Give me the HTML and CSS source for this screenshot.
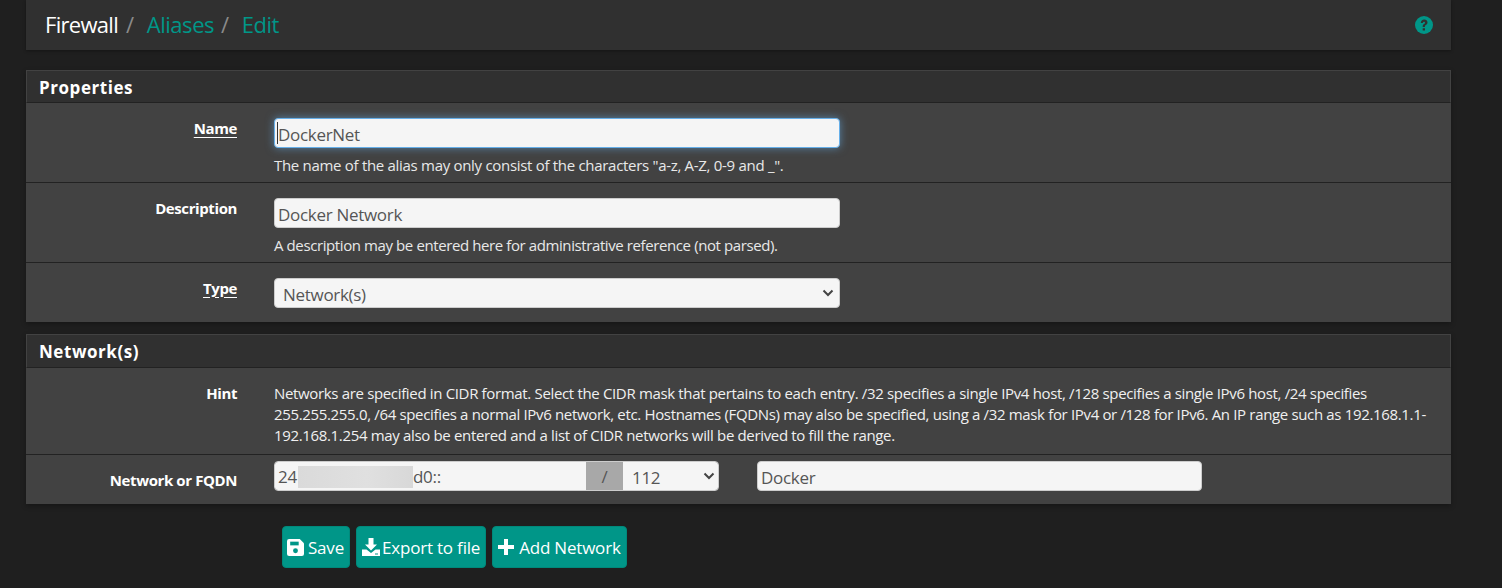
FILE: index.html
```html
<!DOCTYPE html>
<html lang="en">
<head>
<meta charset="utf-8">
<title>Firewall: Aliases: Edit</title>
<link rel="stylesheet" href="styles.css">
</head>
<body>
<div class="page">
  <header class="topbar">
    <nav class="crumbs">
      <span class="crumb-current">Firewall</span><span class="sep">/</span><a class="crumb-link">Aliases</a><span class="sep sep-two">/</span><a class="crumb-link">Edit</a>
    </nav>
    <svg class="help" viewBox="0 0 18 18" aria-label="Help"><circle cx="9" cy="9" r="9" fill="#009688"/><path d="M5.800 6.900C5.900 4.900 7.200 3.600 9.200 3.600c1.900 0 3.300 1.200 3.300 2.900 0 1.300-.7 2-1.600 2.600-.8.5-1 .8-1 1.500v.3H7.700v-.5c0-1.100.4-1.800 1.300-2.400.8-.5 1-.8 1-1.300 0-.6-.4-1-1-1-.7 0-1.100.4-1.200 1.200z M7.700 12.200h2.300v2.200H7.700z" fill="#303030"/></svg>
  </header>

  <section class="panel panel-props">
    <h2 class="panel-title">Properties</h2>
    <div class="row row-name">
      <label class="label req">Name</label>
      <div class="field">
        <div class="caret-wrap">
          <input class="input input-wide focus" type="text" value="DockerNet">
          <span class="caret"></span>
        </div>
        <p class="help-text">The name of the alias may only consist of the characters "a-z, A-Z, 0-9 and _".</p>
      </div>
    </div>
    <div class="row row-name">
      <label class="label">Description</label>
      <div class="field">
        <input class="input input-wide" type="text" value="Docker Network">
        <p class="help-text help-tight">A description may be entered here for administrative reference (not parsed).</p>
      </div>
    </div>
    <div class="row row-type">
      <label class="label req">Type</label>
      <div class="field">
        <div class="select input-wide"><span>Network(s)</span><svg class="chev" viewBox="0 0 12 8"><path d="M1.500 1.500 6 6l4.500-4.500" fill="none" stroke="#444" stroke-width="2"/></svg></div>
      </div>
    </div>
  </section>

  <section class="panel panel-net">
    <h2 class="panel-title net-title">Network(s)</h2>
    <div class="row row-hint">
      <label class="label">Hint</label>
      <div class="field hint">Networks are specified in CIDR format. Select the CIDR mask that pertains to each entry. /32 specifies a single IPv4 host, /128 specifies a single IPv6 host, /24 specifies 255.255.255.0, /64 specifies a normal IPv6 network, etc. Hostnames (FQDNs) may also be specified, using a /32 mask for IPv4 or /128 for IPv6. An IP range such as 192.168.1.1-192.168.1.254 may also be entered and a list of CIDR networks will be derived to fill the range.</div>
    </div>
    <div class="row row-net">
      <label class="label">Network or FQDN</label>
      <div class="field net-fields">
        <div class="group">
          <div class="addr"><span class="addr-start">24</span><span class="redact"></span><span>d0::</span></div>
          <div class="slash">/</div>
          <div class="mask"><span>112</span><svg class="chev" viewBox="0 0 12 8"><path d="M1.500 1.500 6 6l4.500-4.500" fill="none" stroke="#444" stroke-width="2"/></svg></div>
        </div>
        <input class="input input-desc" type="text" value="Docker">
      </div>
    </div>
  </section>

  <div class="actions">
    <button class="btn" type="button"><svg class="ic ic-save" viewBox="0 0 16 16"><path fill="#fff" d="M2 0h10l4 4v10a2 2 0 0 1-2 2H2a2 2 0 0 1-2-2V2a2 2 0 0 1 2-2z"/><path fill="#009688" d="M3 2.500h8v3.500H3z"/><circle cx="8" cy="11" r="2.300" fill="#009688"/></svg>Save</button>
    <button class="btn" type="button"><svg class="ic ic-dl" viewBox="0 0 18 18"><path fill="#fff" d="M6.500 0h5v6.500H15L9 12.500 3 6.500h3.500z"/><path fill="#fff" d="M0 11.500h4.500L9 15l4.500-3.500H18V18H0z"/><path fill="#009688" d="M13 15.500h3v1h-3z"/></svg>Export to file</button>
    <button class="btn" type="button"><svg class="ic ic-plus" viewBox="0 0 16 16"><path fill="#fff" d="M6 0h4v6h6v4h-6v6H6v-6H0V6h6z"/></svg>Add Network</button>
  </div>
</div>
</body>
</html>
```
FILE: styles.css
```css
* { box-sizing: border-box; }
html, body { margin: 0; height: 100%; }
body {
  background: #1f1f1f;
  color: #fff;
  font-family: "Open Sans", "Noto Sans", sans-serif;
  font-size: 15px;
  overflow: hidden;
}
.page { margin: 0 51px 0 26px; }

.topbar {
  height: 50px;
  background: #303030;
  box-shadow: 0 1px 3px rgba(0,0,0,.35);
  display: flex;
  align-items: center;
  justify-content: space-between;
  padding: 0 18px 0 19px;
  margin-bottom: 20px;
}
.crumbs { font-size: 22px; letter-spacing: -.45px; line-height: 48px; height: 50px; }
.crumb-current { color: #fff; letter-spacing: -.7px; }
.sep { color: #8a8a8a; margin: 0 13px 0 8px; }
.sep-two { margin: 0 13px 0 7px; }
.crumb-link { color: #009688; }
.help { width: 18px; height: 18px; }

.panel { background: #424242; box-shadow: 0 2px 5px rgba(0,0,0,.3); }
.panel-props { margin-bottom: 12px; }
.panel-title {
  margin: 0;
  height: 33px;
  background: #303030;
  border: 1px solid #424242;
  border-bottom-color: #222;
  padding-left: 12px;
  font-size: 17px;
  font-weight: 700;
  line-height: 33px;
  letter-spacing: .55px;
}
.net-title { height: 34px; line-height: 34px; }

.row {
  display: grid;
  grid-template-columns: 211px 1fr;
  column-gap: 37px;
  border-bottom: 1px solid #222;
}
.row:last-child { border-bottom: 0; }
.row-name { height: 80px; padding-top: 15px; }
.row-type { height: 59px; padding-top: 15px; }
.row-hint { height: 87px; padding-top: 15px; }
.row-net { height: 49px; padding-top: 6px; }

.label {
  text-align: right;
  font-weight: 700;
  font-size: 15px;
  letter-spacing: -.4px;
  line-height: 20px;
}
.row-net .label { padding-top: 9px; }
.req { text-decoration: underline; text-underline-offset: 3px; }

.caret-wrap { position: relative; width: 566px; }
.caret {
  position: absolute;
  left: 3px;
  top: 4px;
  width: 1px;
  height: 22px;
  background: #333;
}
.input {
  display: block;
  height: 30px;
  background: #f5f5f5;
  border: 1px solid #ccc;
  border-radius: 4px;
  padding: 3px 3px 0;
  font: 17px/24px "Open Sans", "Noto Sans", sans-serif;
  letter-spacing: -.3px;
  color: #555;
  outline: 0;
}
.input-wide { width: 566px; }
.focus {
  border-color: #66afe9;
  box-shadow: 0 0 8px rgba(102,175,233,.6);
}
.help-text {
  margin: 7px 0 0;
  font-size: 15px;
  letter-spacing: -.3px;
  line-height: 20px;
  color: #e8e8e8;
}
.help-tight { letter-spacing: -.4px; }
.select {
  height: 30px;
  display: flex;
  align-items: center;
  justify-content: space-between;
  background: #f5f5f5;
  border: 1px solid #ccc;
  border-radius: 4px;
  padding: 2px 5px 0 8px;
  font-size: 17px;
  letter-spacing: -.3px;
  color: #555;
}
.chev { width: 12px; height: 8px; margin-bottom: 2px; }

.hint {
  font-size: 15px;
  line-height: 21px;
  letter-spacing: -.34px;
  padding-right: 12px;
  color: #f0f0f0;
}
.net-fields { display: flex; align-items: flex-start; column-gap: 38px; }
.group {
  display: flex;
  width: 445px;
  height: 30px;
  border: 1px solid #ccc;
  border-radius: 4px;
  overflow: hidden;
  font-size: 17px;
  letter-spacing: -.3px;
  color: #555;
}
.addr {
  width: 311px;
  background: #f5f5f5;
  display: flex;
  align-items: center;
  padding: 1px 0 0 3px;
  line-height: 24px;
}
.addr-start { width: 20px; white-space: nowrap; flex: none; }
.redact { width: 115px; height: 22px; flex: none; background: linear-gradient(90deg, #dadada, #e0e0e0 60%, #d8d8d8); }
.slash {
  width: 37px;
  background: #a8a8a8;
  display: flex;
  align-items: center;
  justify-content: center;
}
.mask {
  flex: 1;
  background: #f5f5f5;
  display: flex;
  align-items: center;
  justify-content: space-between;
  padding: 2px 3px 0 9px;
}
.input-desc { width: 445px; padding-top: 2px; }

.actions { display: flex; column-gap: 6px; padding: 22px 0 0 256px; }
.btn {
  height: 42px;
  display: flex;
  align-items: center;
  background: #009688;
  border: 1px solid #00897b;
  border-radius: 4px;
  padding: 0 5px;
  color: #fff;
  font: 17px "Open Sans", "Noto Sans", sans-serif;
  letter-spacing: -.2px;
}
.ic { flex: none; }
.ic-save { width: 17px; height: 17px; margin: 0 4px 0 -1px; }
.ic-dl { width: 18px; height: 18px; margin-right: 2px; }
.ic-plus { width: 16px; height: 16px; margin-right: 5px; }
```
